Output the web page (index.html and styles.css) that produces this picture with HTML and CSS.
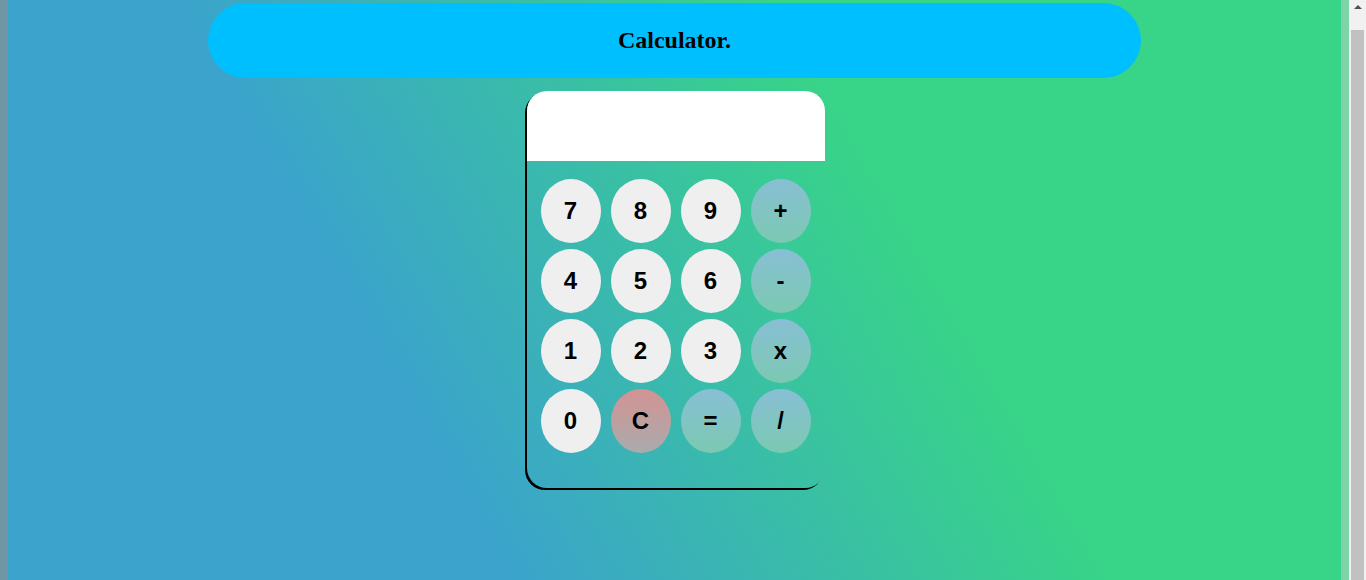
FILE: index.html
```html
<!DOCTYPE html>
<html lang="en">
<head>
<meta charset="utf-8">
<title>Calculator</title>
<link rel="stylesheet" href="styles.css">
</head>
<body>
<div class="viewport">
  <div class="page">
    <header class="title-bar">
      <h2 class="title">Calculator.</h2>
    </header>
    <main class="calc">
      <div class="display"></div>
      <div class="keys">
        <button class="key">7</button>
        <button class="key">8</button>
        <button class="key">9</button>
        <button class="key op">+</button>
        <button class="key">4</button>
        <button class="key">5</button>
        <button class="key">6</button>
        <button class="key op">-</button>
        <button class="key">1</button>
        <button class="key">2</button>
        <button class="key">3</button>
        <button class="key op">x</button>
        <button class="key">0</button>
        <button class="key clear">C</button>
        <button class="key op">=</button>
        <button class="key op">/</button>
      </div>
    </main>
  </div>
  <div class="scrollbar">
    <div class="scroll-arrow"></div>
    <div class="scroll-thumb"></div>
  </div>
</div>
</body>
</html>
```
FILE: styles.css
```css
html, body {
  margin: 0;
  height: 100%;
  overflow: hidden;
}
body {
  font-family: "Liberation Serif", "Times New Roman", serif;
}
.viewport {
  display: flex;
  height: 100%;
}
.page {
  flex: 1;
  display: flex;
  flex-direction: column;
  border-left: 8px solid #6e97a3;
  border-right: 8px solid #7fd3a9;
  padding-top: 3px;
  background: linear-gradient(60deg, #3ba3cc 30%, #38d488 66%);
}
.title-bar {
  width: 70%;
  height: 75px;
  margin: 0 auto;
  background: #00bfff;
  border-radius: 38px;
  display: flex;
  align-items: center;
  justify-content: center;
}
.title {
  margin: 0;
  font-size: 24px;
  font-weight: bold;
  color: #000;
}
.calc {
  width: 298px;
  margin: 13px 0 0 calc(50% - 148px);
  border-radius: 20px;
  box-shadow: -2px 2px 0 #000;
}
.display {
  height: 70px;
  background: #fff;
  border-radius: 20px 20px 0 0;
}
.keys {
  display: grid;
  grid-template-columns: repeat(4, 60px);
  grid-auto-rows: 64px;
  column-gap: 10px;
  row-gap: 6px;
  padding: 18px 14px 35px;
}
.key {
  border: none;
  border-radius: 50%;
  background: #efefef;
  font-family: "Liberation Sans", Arial, sans-serif;
  font-weight: bold;
  font-size: 24px;
  color: #000;
  padding: 0;
}
.op {
  background: linear-gradient(180deg, #88bfd5, #7bc9b1);
}
.clear {
  background: linear-gradient(180deg, #d39393, #a9abad);
}
.scrollbar {
  width: 17px;
  flex: none;
  background: #f1f1f1;
  display: flex;
  flex-direction: column;
  align-items: center;
}
.scroll-arrow {
  margin-top: 5px;
  width: 0;
  height: 0;
  border-left: 4px solid transparent;
  border-right: 4px solid transparent;
  border-bottom: 4px solid #505050;
}
.scroll-thumb {
  margin-top: 21px;
  width: 13px;
  flex: 1;
  background: #c1c1c1;
}
```
